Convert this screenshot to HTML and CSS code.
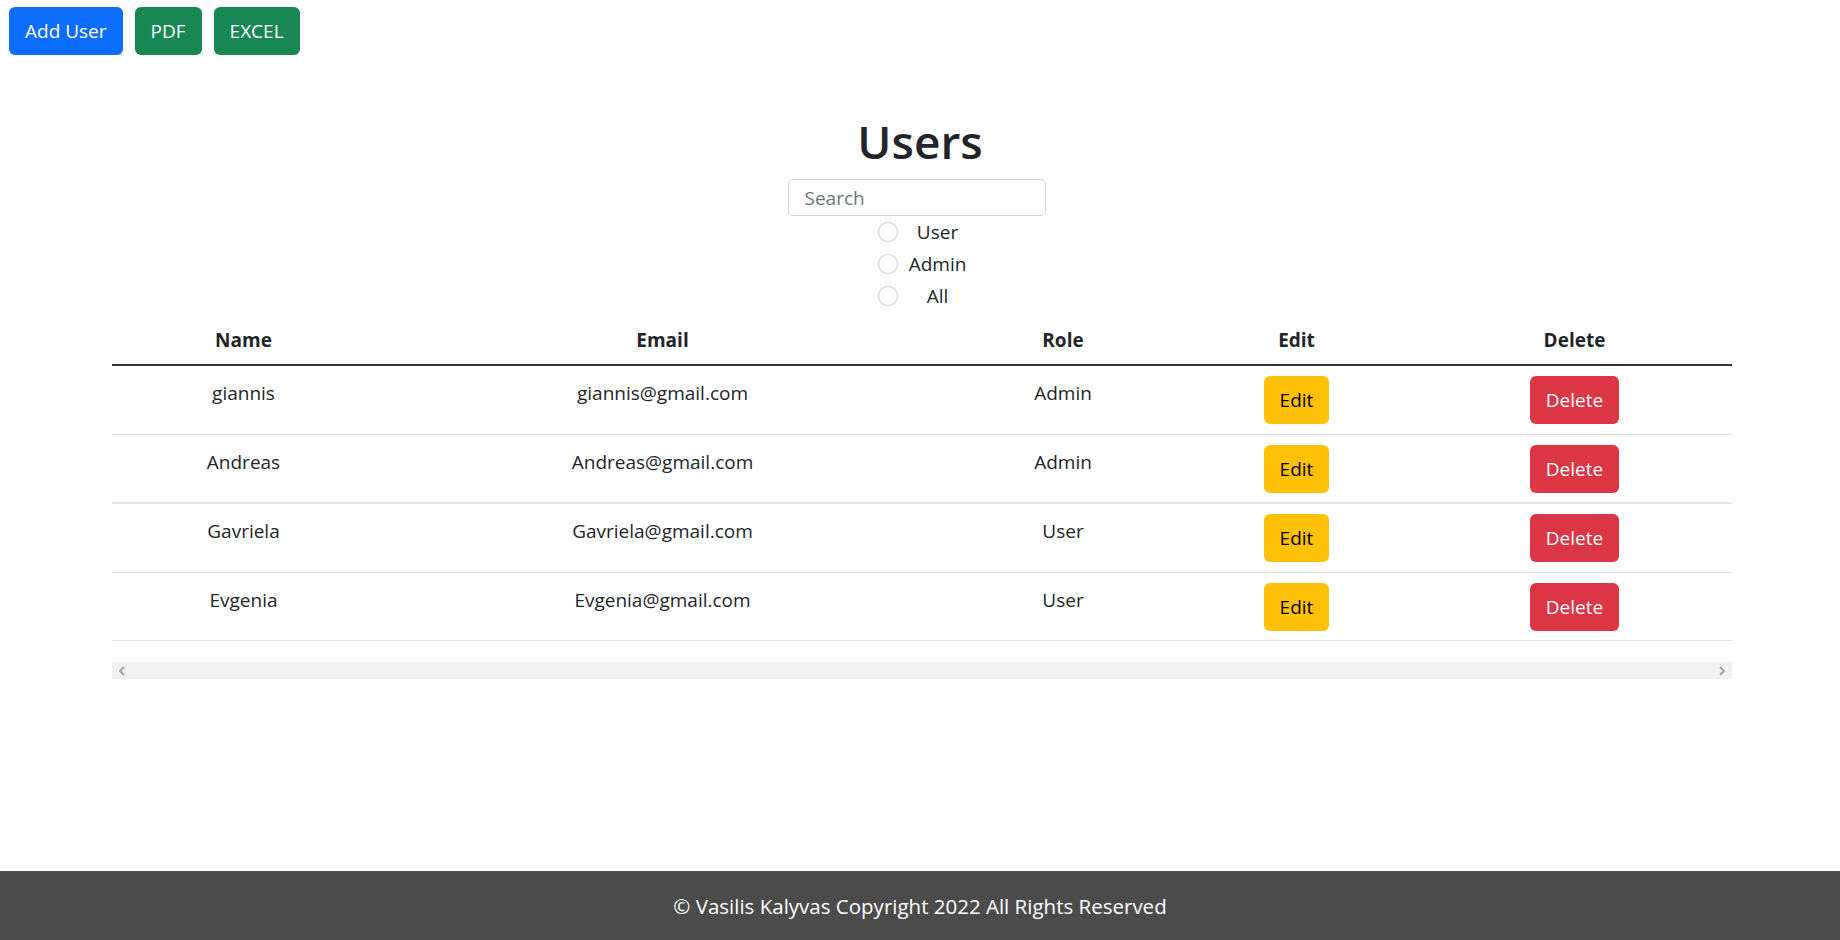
FILE: index.html
```html
<!DOCTYPE html>
<html lang="en">
<head>
<meta charset="utf-8">
<title>Users</title>
<link rel="stylesheet" href="styles.css">
</head>
<body>
<div class="page">
  <div class="toolbar">
    <button class="btn btn-primary">Add User</button>
    <button class="btn btn-success">PDF</button>
    <button class="btn btn-success">EXCEL</button>
  </div>

  <div class="head">
    <h1 class="title">Users</h1>
    <input class="search" type="text" placeholder="Search">
    <div class="filters">
      <label class="filter"><input class="radio" type="radio" name="role"><span class="filter-text">User</span></label>
      <label class="filter"><input class="radio" type="radio" name="role"><span class="filter-text">Admin</span></label>
      <label class="filter"><input class="radio" type="radio" name="role"><span class="filter-text">All</span></label>
    </div>
  </div>

  <div class="table-wrap">
    <table class="users">
      <colgroup>
        <col class="c-name"><col class="c-email"><col class="c-role"><col class="c-edit"><col class="c-del">
      </colgroup>
      <thead>
        <tr><th>Name</th><th>Email</th><th>Role</th><th>Edit</th><th>Delete</th></tr>
      </thead>
      <tbody>
        <tr><td>giannis</td><td>giannis@gmail.com</td><td>Admin</td><td class="cell-btn"><button class="btn btn-warning">Edit</button></td><td class="cell-btn"><button class="btn btn-danger">Delete</button></td></tr>
        <tr class="row-thick"><td>Andreas</td><td>Andreas@gmail.com</td><td>Admin</td><td class="cell-btn"><button class="btn btn-warning">Edit</button></td><td class="cell-btn"><button class="btn btn-danger">Delete</button></td></tr>
        <tr><td>Gavriela</td><td>Gavriela@gmail.com</td><td>User</td><td class="cell-btn"><button class="btn btn-warning">Edit</button></td><td class="cell-btn"><button class="btn btn-danger">Delete</button></td></tr>
        <tr><td>Evgenia</td><td>Evgenia@gmail.com</td><td>User</td><td class="cell-btn"><button class="btn btn-warning">Edit</button></td><td class="cell-btn"><button class="btn btn-danger">Delete</button></td></tr>
      </tbody>
    </table>
    <div class="hscroll">
      <svg class="arrow" width="8" height="10" viewBox="0 0 8 10"><path d="M6 1 L2 5 L6 9" fill="none" stroke="#a3a3a3" stroke-width="2"/></svg>
      <svg class="arrow" width="8" height="10" viewBox="0 0 8 10"><path d="M2 1 L6 5 L2 9" fill="none" stroke="#a3a3a3" stroke-width="2"/></svg>
    </div>
  </div>

  <footer class="footer">© Vasilis Kalyvas Copyright 2022 All Rights Reserved</footer>
</div>
</body>
</html>
```

FILE: styles.css
```css
* { box-sizing: border-box; }

html, body {
  margin: 0;
  padding: 0;
}

body {
  font-family: "Open Sans", "Noto Sans", sans-serif;
  font-size: 19px;
  line-height: 30px;
  color: #212529;
  background: #fff;
}

.page {
  min-height: 940px;
  display: flex;
  flex-direction: column;
}

.toolbar {
  display: flex;
  gap: 12px;
  padding: 7px 0 0 9px;
}

.btn {
  font-family: inherit;
  font-size: 19px;
  line-height: 30px;
  padding: 8px 15px;
  border: 1px solid transparent;
  border-radius: 6px;
  cursor: pointer;
  display: inline-block;
}

.btn-primary { background: #0d6efd; color: #fff; }
.btn-success { background: #198754; color: #fff; }
.btn-warning { background: #ffc107; color: #000; }
.btn-danger  { background: #dc3545; color: #fff; }

.head {
  display: flex;
  flex-direction: column;
  align-items: center;
  padding-top: 56px;
}

.title {
  margin: 0 0 8px;
  font-size: 46px;
  line-height: 60px;
  font-weight: 600;
  color: #212529;
}

.search {
  width: 258px;
  height: 37px;
  margin-right: 7px;
  padding: 0 16px;
  font-family: inherit;
  font-size: 19px;
  color: #212529;
  border: 1px solid #ced4da;
  border-radius: 5px;
  outline: none;
}

.search::placeholder { color: #6c757d; }

.filters {
  display: flex;
  flex-direction: column;
  padding-bottom: 1px;
}

.filter {
  display: flex;
  align-items: center;
  height: 32px;
  padding-left: 15px;
}

.radio {
  appearance: none;
  -webkit-appearance: none;
  margin: 0;
  width: 20px;
  height: 20px;
  border: 1.5px solid #c8c8c8;
  border-radius: 50%;
  background: #fff;
}

.filter-text {
  width: 79px;
  text-align: center;
}

.table-wrap {
  padding: 0 108px 0 112px;
}

.users {
  width: 1620px;
  border-collapse: collapse;
  table-layout: fixed;
  margin-bottom: 21px;
}

.c-name  { width: 263px; }
.c-email { width: 575px; }
.c-role  { width: 226px; }
.c-edit  { width: 241px; }
.c-del   { width: 315px; }

.users th,
.users td {
  text-align: center;
  padding: 12px 10px 9px;
  vertical-align: top;
}

.users th {
  font-weight: 700;
  border-bottom: 2px solid #333;
}

.users td {
  border-bottom: 1px solid #dee2e6;
}

.users td.cell-btn {
  padding: 10px 10px 9.6px;
}

.users .row-thick td {
  border-bottom: 2px solid #dfe2e6;
}

.hscroll {
  width: 1620px;
  height: 17px;
  background: #f1f1f1;
  display: flex;
  justify-content: space-between;
  align-items: center;
  padding: 0 6px;
}

.arrow { display: block; }

.footer {
  margin-top: auto;
  height: 69px;
  background: #4b4b4b;
  color: #fff;
  font-size: 20.5px;
  display: flex;
  align-items: center;
  justify-content: center;
}
```
